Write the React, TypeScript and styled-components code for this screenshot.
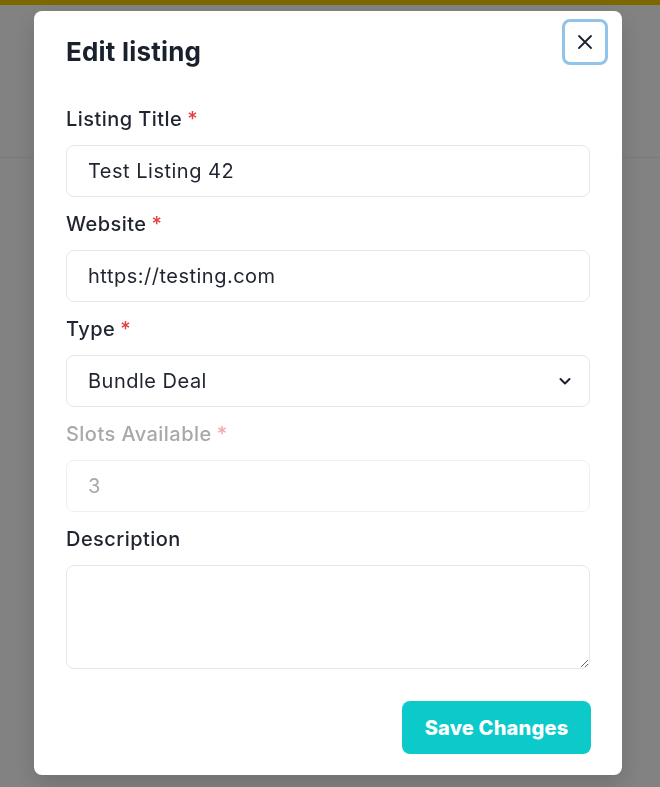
import React from "react";
import styled, { createGlobalStyle } from "styled-components";

const Global = createGlobalStyle`
  html, body { margin: 0; padding: 0; }
  body {
    font-family: Inter, "Noto Sans", sans-serif;
    background: #ffffff;
    width: 660px;
    height: 787px;
    overflow: hidden;
  }
  * { box-sizing: border-box; }
`;

const Page = styled.div`
  width: 660px;
  height: 787px;
  display: flex;
  flex-direction: column;
`;

const TopStripe = styled.div`
  height: 5px;
  background: #f5cc00;
`;

const PageHeader = styled.div`
  height: 153px;
  border-bottom: 1px solid #f0f0f0;
`;

const Overlay = styled.div`
  position: fixed;
  inset: 0;
  background: rgba(0, 0, 0, 0.49);
  display: flex;
  justify-content: flex-start;
  align-items: flex-start;
  padding: 11px 0 0 34px;
`;

const Modal = styled.div`
  position: relative;
  width: 588px;
  height: 764px;
  background: #ffffff;
  border-radius: 8px;
  box-shadow: 0 10px 25px rgba(0, 0, 0, 0.15);
  display: flex;
  flex-direction: column;
`;

const Header = styled.header`
  padding: 24px 32px 0 32px;
`;

const Title = styled.h2`
  margin: 0;
  font-size: 26px;
  line-height: 34px;
  font-weight: 700;
  letter-spacing: 0.2px;
  color: #1a202c;
`;

const CloseButton = styled.button`
  position: absolute;
  top: 8px;
  right: 14px;
  width: 46px;
  height: 46px;
  border-radius: 8px;
  border: 3px solid #92c3e8;
  background: #ffffff;
  display: flex;
  align-items: center;
  justify-content: center;
  padding: 0;
  cursor: pointer;
  color: #1a202c;
`;

const Body = styled.form`
  padding: 36px 32px 0 32px;
  display: flex;
  flex-direction: column;
  gap: 13px;
`;

const Field = styled.div`
  display: flex;
  flex-direction: column;
`;

const Label = styled.label<{ $disabled?: boolean }>`
  font-size: 20px;
  line-height: 28px;
  font-weight: 500;
  letter-spacing: 0.45px;
  color: ${(p) => (p.$disabled ? "#a8a8a8" : "#1f2430")};
  margin-bottom: 12px;
`;

const Star = styled.span<{ $disabled?: boolean }>`
  color: ${(p) => (p.$disabled ? "#f2a9a9" : "#e53e3e")};
  margin-left: 5px;
`;

const fieldText = `
  font-family: Inter, "Noto Sans", sans-serif;
  font-size: 20px;
  letter-spacing: 0.5px;
  color: #1f2430;
`;

const Input = styled.input`
  width: 100%;
  height: 52px;
  border: 1px solid #e2e8f0;
  border-radius: 8px;
  padding: 0 21px;
  ${fieldText}
  background: #ffffff;
  outline: none;
  &:disabled {
    color: #a8a8a8;
    border-color: #eef0f3;
    background: #ffffff;
    opacity: 1;
  }
`;

const SelectWrap = styled.div`
  position: relative;
  width: 100%;
`;

const Select = styled.select`
  width: 100%;
  height: 52px;
  border: 1px solid #e2e8f0;
  border-radius: 8px;
  padding: 0 40px 0 21px;
  ${fieldText}
  background: #ffffff;
  appearance: none;
  outline: none;
`;

const Chevron = styled.svg`
  position: absolute;
  right: 18px;
  top: 50%;
  transform: translateY(-50%);
  pointer-events: none;
`;

const TextArea = styled.textarea`
  width: 100%;
  height: 104px;
  border: 1px solid #e2e8f0;
  border-radius: 8px;
  padding: 10px 21px;
  ${fieldText}
  outline: none;
  resize: vertical;
  display: block;
`;

const Footer = styled.footer`
  margin-top: auto;
  padding: 0 31px 21px 32px;
  display: flex;
  justify-content: flex-end;
`;

const SaveButton = styled.button`
  width: 189px;
  height: 53px;
  border: none;
  border-radius: 8px;
  background: #0ccaca;
  color: #ffffff;
  font-family: inherit;
  font-size: 20px;
  font-weight: 800;
  letter-spacing: 0.2px;
  cursor: pointer;
`;

export default function App() {
  return (
    <>
      <Global />
      <Page>
        <TopStripe />
        <PageHeader />
      </Page>
      <Overlay>
        <Modal>
          <Header>
            <Title>Edit listing</Title>
          </Header>
          <CloseButton aria-label="Close">
            <svg width="16" height="16" viewBox="0 0 16 16" fill="none">
              <path d="M2 2L14 14M14 2L2 14" stroke="#1a202c" strokeWidth="1.8" strokeLinecap="round" />
            </svg>
          </CloseButton>
          <Body onSubmit={(e) => e.preventDefault()}>
            <Field>
              <Label>
                Listing Title<Star>*</Star>
              </Label>
              <Input defaultValue="Test Listing 42" />
            </Field>
            <Field>
              <Label>
                Website<Star>*</Star>
              </Label>
              <Input defaultValue="https://testing.com" />
            </Field>
            <Field>
              <Label>
                Type<Star>*</Star>
              </Label>
              <SelectWrap>
                <Select defaultValue="bundle">
                  <option value="bundle">Bundle Deal</option>
                </Select>
                <Chevron width="14" height="14" viewBox="0 0 14 14" fill="none">
                  <path d="M2.5 5L7 9.5L11.5 5" stroke="#1a202c" strokeWidth="2" strokeLinecap="round" strokeLinejoin="round" />
                </Chevron>
              </SelectWrap>
            </Field>
            <Field>
              <Label $disabled>
                Slots Available<Star $disabled>*</Star>
              </Label>
              <Input defaultValue="3" disabled />
            </Field>
            <Field>
              <Label>Description</Label>
              <TextArea />
            </Field>
          </Body>
          <Footer>
            <SaveButton type="button">Save Changes</SaveButton>
          </Footer>
        </Modal>
      </Overlay>
    </>
  );
}
